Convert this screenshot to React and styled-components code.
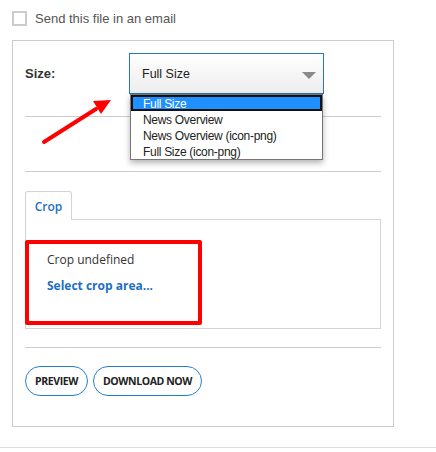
import React from "react";
import styled, { createGlobalStyle } from "styled-components";

const GlobalStyle = createGlobalStyle`
  body {
    margin: 0;
    background: #fff;
    font-family: "Liberation Sans", Arial, sans-serif;
  }
`;

const Page = styled.div`
  position: relative;
  width: 436px;
  height: 448px;
  padding: 11px 0 0 12px;
  box-sizing: border-box;
  border-bottom: 1px solid #dcdce0;
`;

const CheckRow = styled.label`
  display: flex;
  align-items: center;
  gap: 8px;
  height: 15px;
  font-size: 13px;
  color: #555;
`;

const CheckBox = styled.span`
  width: 15px;
  height: 15px;
  box-sizing: border-box;
  border: 2px solid #cccccc;
`;

const Panel = styled.div`
  position: relative;
  margin-top: 14px;
  width: 382px;
  box-sizing: border-box;
  border: 1px solid #cccccc;
  padding: 0 12px 30px;
`;

const SizeRow = styled.div`
  position: relative;
  display: flex;
  align-items: center;
  padding: 12px 0 22px;
  border-bottom: 1px solid #cccccc;
`;

const Label = styled.span`
  width: 104px;
  font-size: 13px;
  font-weight: bold;
  color: #333;
`;

const Select = styled.div`
  position: relative;
  width: 195px;
  height: 41px;
  box-sizing: border-box;
  border: 1px solid #2a76b8;
  background: linear-gradient(#ffffff, #ededed);
  display: flex;
  align-items: center;
  padding-left: 12px;
  font-size: 12.5px;
  color: #222;
`;

const Caret = styled.span`
  position: absolute;
  right: 7px;
  top: 18px;
  width: 0;
  height: 0;
  border-left: 7px solid transparent;
  border-right: 7px solid transparent;
  border-top: 7px solid #8a8a8a;
`;

const Dropdown = styled.ul`
  position: absolute;
  left: 105px;
  top: 53px;
  width: 193px;
  margin: 0;
  padding: 0;
  list-style: none;
  box-sizing: border-box;
  border: 1px solid #767676;
  background: #fff;
  box-shadow: 0 3px 6px rgba(0, 0, 0, 0.3);
  z-index: 2;
`;

const Option = styled.li`
  height: 16px;
  line-height: 14px;
  padding-left: 10px;
  box-sizing: border-box;
  font-size: 12px;
  letter-spacing: -0.3px;
  color: ${(p) => (p.$active ? "#fff" : "#222")};
  background: ${(p) => (p.$active ? "#1e90ff" : "transparent")};
  border: 2px solid ${(p) => (p.$active ? "#111" : "transparent")};
  white-space: nowrap;
`;

const Spacer = styled.div`
  height: 54px;
  border-bottom: 1px solid #cccccc;
`;

const Tabs = styled.div`
  margin-top: 19px;
  font-family: "Open Sans", "Liberation Sans", sans-serif;
`;

const Tab = styled.div`
  width: 47px;
  height: 29px;
  box-sizing: border-box;
  border: 1px solid #d3d3dd;
  border-bottom: none;
  border-radius: 3px 3px 0 0;
  background: #fff;
  position: relative;
  z-index: 1;
  margin-bottom: -1px;
  display: flex;
  align-items: center;
  justify-content: center;
  font-size: 12px;
  font-weight: 600;
  color: #1f6fc0;
`;

const TabPanel = styled.div`
  position: relative;
  height: 110px;
  box-sizing: border-box;
  border: 1px solid #d3d3dd;
  padding: 32px 0 0 21px;
  font-size: 12px;
`;

const Note = styled.div`
  color: #333;
  line-height: 16px;
`;

const LinkText = styled.div`
  margin-top: 10px;
  color: #1f6fc0;
  font-weight: 700;
  line-height: 16px;
`;

const Highlight = styled.div`
  position: absolute;
  left: -1px;
  top: 20px;
  width: 177px;
  height: 85px;
  box-sizing: border-box;
  border: 4px solid #ff0000;
  border-radius: 2px;
`;

const Divider = styled.div`
  margin-top: 18px;
  border-bottom: 1px solid #cccccc;
`;

const Buttons = styled.div`
  display: flex;
  gap: 5px;
  margin-top: 18px;
`;

const PillButton = styled.button`
  height: 30px;
  padding: 0 9px;
  border: 1px solid #1f7fd0;
  border-radius: 15px;
  background: #fff;
  font-family: "Open Sans", "Liberation Sans", sans-serif;
  font-size: 10.5px;
  font-weight: 700;
  color: #222;
  letter-spacing: -0.4px;
`;

const Arrow = () => (
  <svg
    width="80"
    height="50"
    viewBox="0 0 80 50"
    style={{ position: "absolute", left: 38, top: 96, zIndex: 3 }}
  >
    <line x1="6" y1="46" x2="58" y2="13" stroke="#ff0000" strokeWidth="4" strokeLinecap="round" />
    <polygon points="73,4 55,5 63,18" fill="#ff0000" />
  </svg>
);

export default function App() {
  return (
    <>
      <GlobalStyle />
      <Page>
        <CheckRow>
          <CheckBox />
          Send this file in an email
        </CheckRow>
        <Panel>
          <SizeRow>
            <Label>Size:</Label>
            <Select>
              Full Size
              <Caret />
            </Select>
            <Dropdown>
              <Option $active>Full Size</Option>
              <Option>News Overview</Option>
              <Option>News Overview (icon-png)</Option>
              <Option>Full Size (icon-png)</Option>
            </Dropdown>
          </SizeRow>
          <Spacer />
          <Tabs>
            <Tab>Crop</Tab>
            <TabPanel>
              <Note>Crop undefined</Note>
              <LinkText>Select crop area...</LinkText>
              <Highlight />
            </TabPanel>
          </Tabs>
          <Divider />
          <Buttons>
            <PillButton>PREVIEW</PillButton>
            <PillButton>DOWNLOAD NOW</PillButton>
          </Buttons>
        </Panel>
        <Arrow />
      </Page>
    </>
  );
}
